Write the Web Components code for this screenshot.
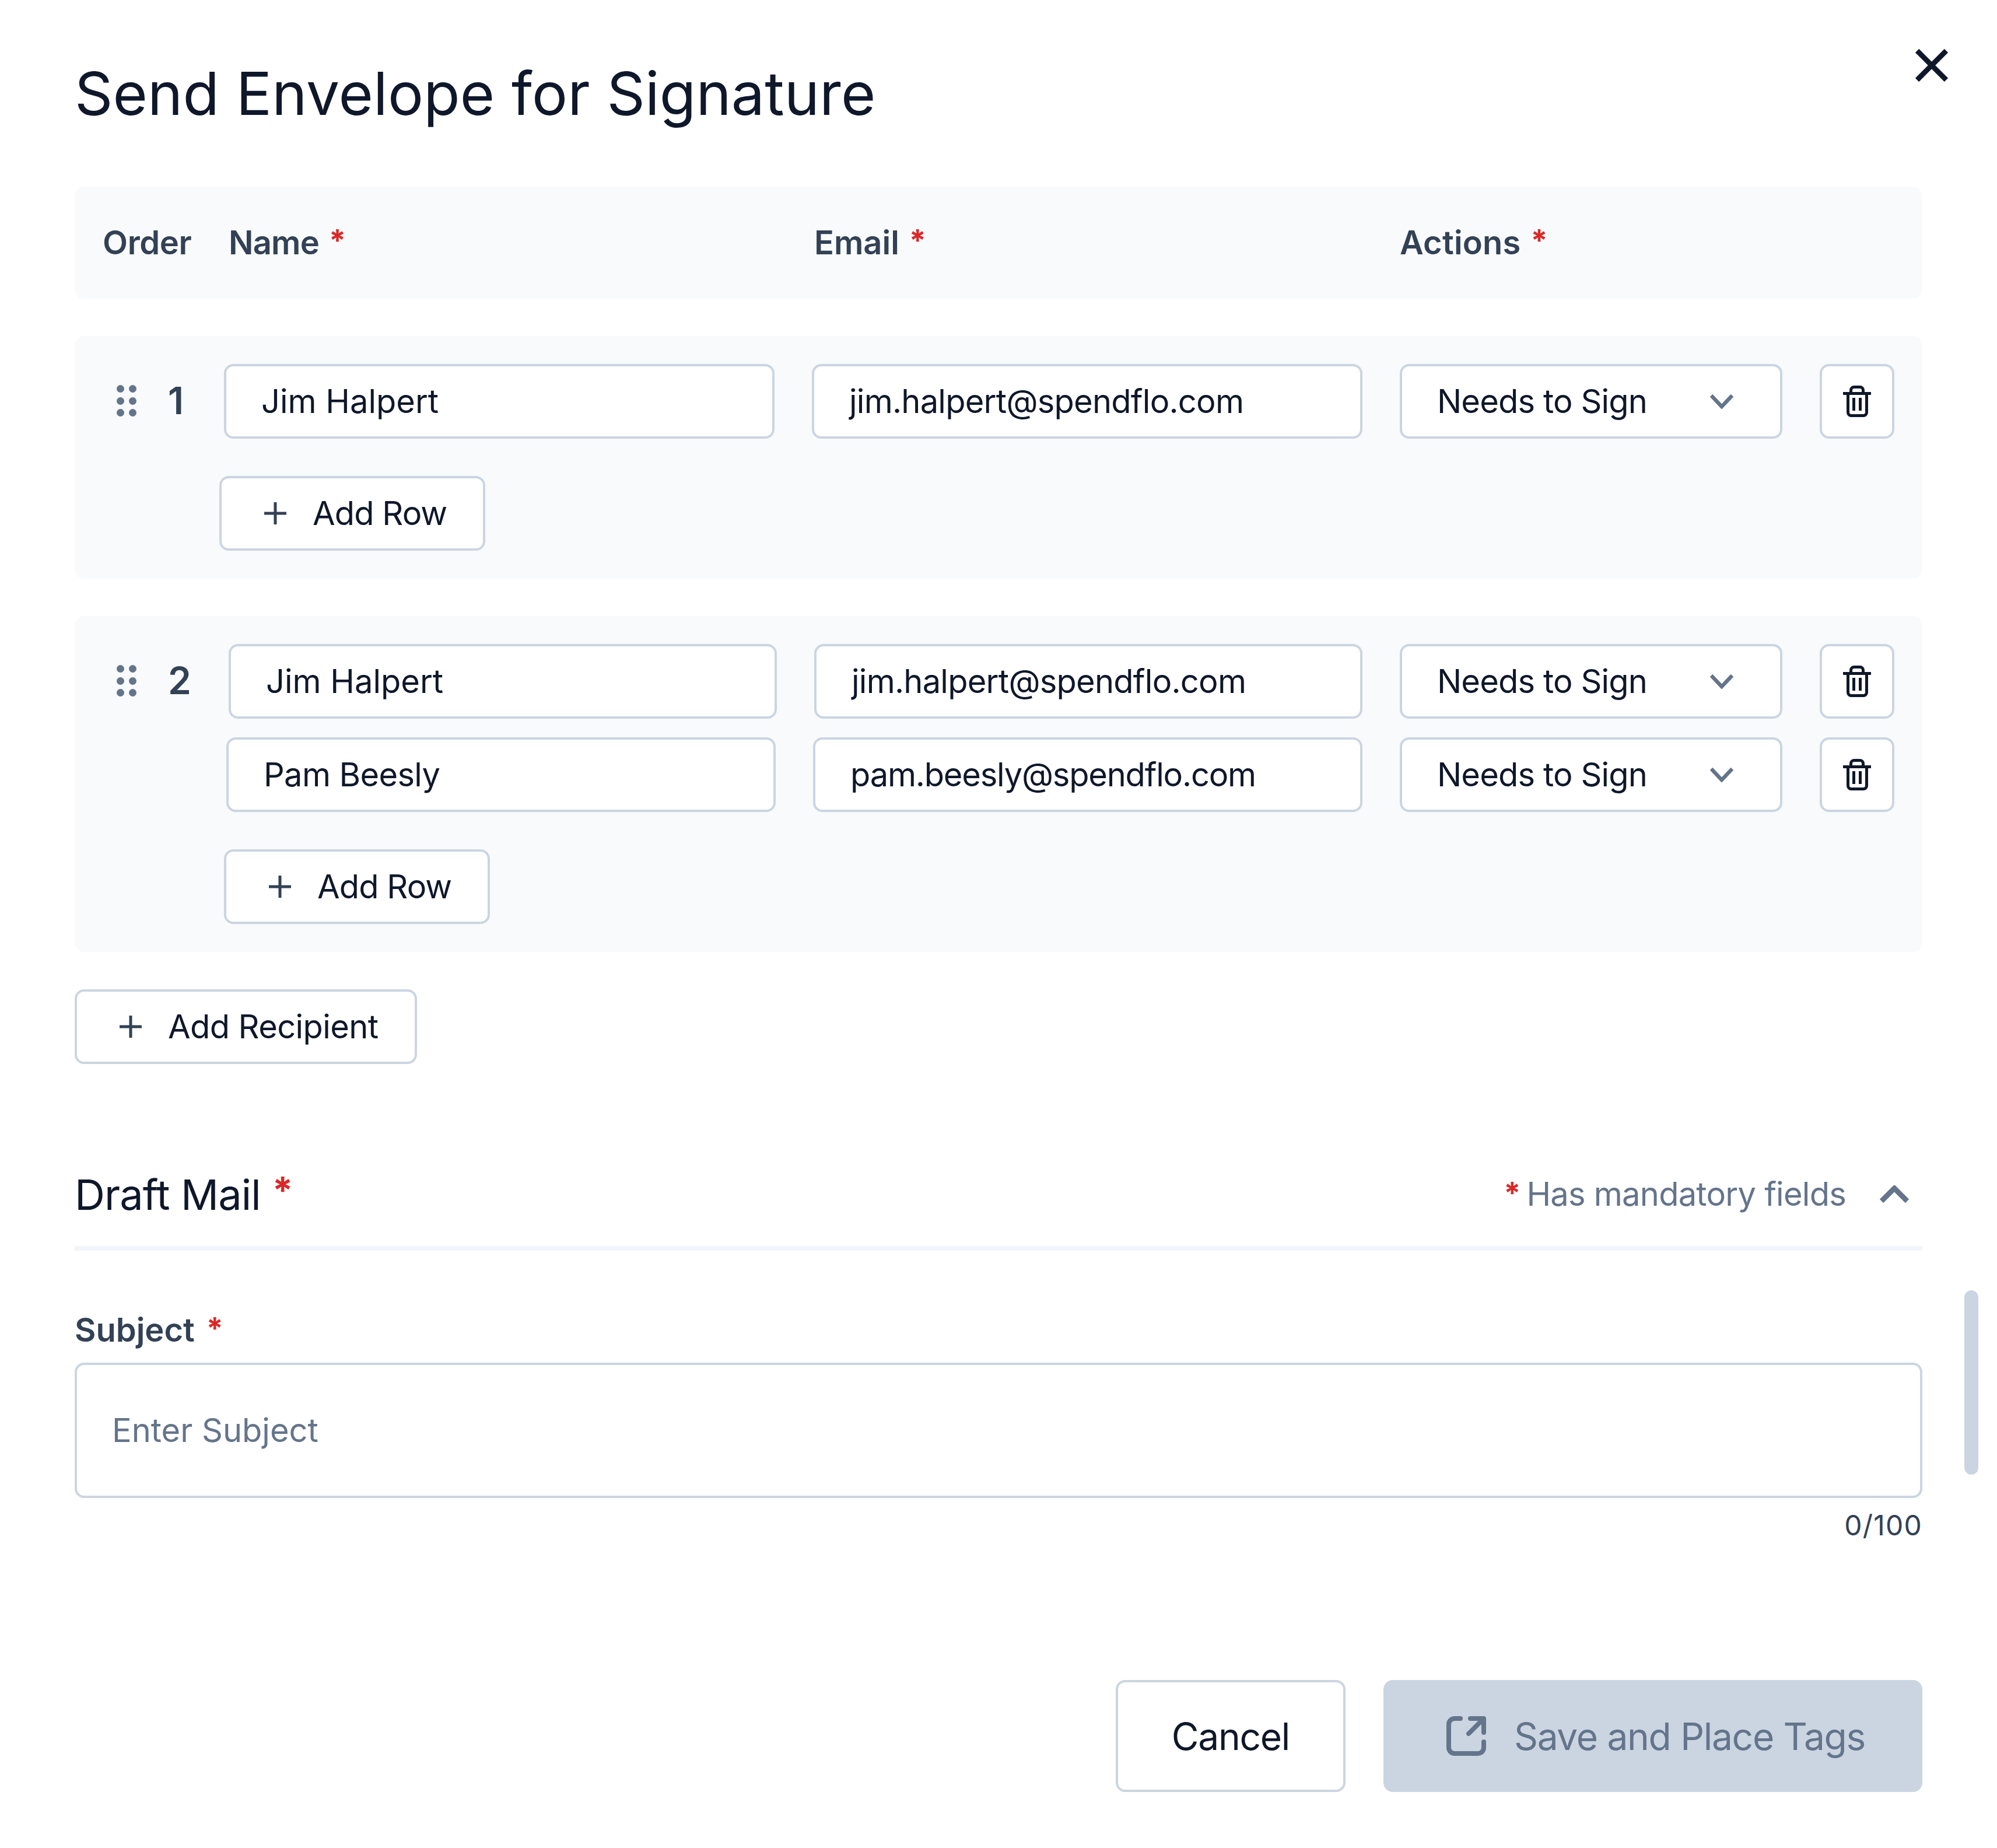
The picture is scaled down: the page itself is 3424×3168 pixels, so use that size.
<!DOCTYPE html>
<html>
<head>
<meta charset="utf-8">
<style>
  html, body { margin: 0; background: #fff; }
  body { font-family: Inter, "Liberation Sans", sans-serif; color: #0F172A; }
</style>
</head>
<body>
<send-modal>
  <span slot="title">Send Envelope for Signature</span>

  <table-head></table-head>

  <recipient-card order="1" add-left="376">
    <recipient-row name="Jim Halpert" email="jim.halpert@spendflo.com" style="--name-ls: 0; --email-ls: -.75px"></recipient-row>
  </recipient-card>

  <recipient-card order="2" add-left="384">
    <recipient-row inset="8" name="Jim Halpert" email="jim.halpert@spendflo.com" style="--name-ls: 0; --email-ls: -.75px"></recipient-row>
    <recipient-row inset="4" name="Pam Beesly" email="pam.beesly@spendflo.com" style="--name-ls: -.65px; --email-ls: -1.2px"></recipient-row>
  </recipient-card>

  <add-button label="Add Recipient" style="margin-top: 64px"></add-button>

  <draft-section></draft-section>
  <modal-footer></modal-footer>
</send-modal>

<script>
const ICONS = {
  plus: '<svg width="38" height="38" viewBox="0 0 38 38" fill="none" stroke="#334155" stroke-width="5"><path d="M19 0v38M0 19h38"/></svg>',
  chevronDown: '<svg width="40" height="26" viewBox="0 0 40 26" fill="none" stroke="#64748B" stroke-width="6.5"><path d="M2 3l18 19L38 3"/></svg>',
  chevronUp: '<svg width="50" height="30" viewBox="0 0 50 30" fill="none" stroke="#64748B" stroke-width="9"><path d="M3 27L25 5l22 22"/></svg>',
  trash: '<svg width="48" height="54" viewBox="0 0 48 54" fill="none" stroke="#0F172A" stroke-width="5"><path d="M0 13.5h48M8.5 13.5V46a5.5 5.5 0 0 0 5.5 5.5h21a5.5 5.5 0 0 0 5.5-5.5V13.5M13.5 13.5V8A5.5 5.5 0 0 1 19 2.5h10A5.5 5.5 0 0 1 34.5 8v5.5M18.5 21v22M29.5 21v22"/></svg>',
  external: '<svg width="68" height="68" viewBox="0 0 68 68" fill="none" stroke="#64748B" stroke-width="8" stroke-linecap="round" stroke-linejoin="round"><path d="M24 4H14A10 10 0 0 0 4 14v40a10 10 0 0 0 10 10h40a10 10 0 0 0 10-10V44"/><path d="M41 4h23v24M62 6L38 30"/></svg>',
  close: '<svg width="56" height="56" viewBox="0 0 56 56" fill="none" stroke="#0F172A" stroke-width="9"><path d="M3 3l50 50M53 3L3 53"/></svg>'
};

class ReqMark extends HTMLElement {
  constructor() {
    super();
    this.attachShadow({ mode: 'open' }).innerHTML = `
      <style>
        :host { display: inline-block; color: #DC2626; font-weight: 700; font-size: var(--req-size, 56px); line-height: 1; margin-left: var(--req-gap, 20px); position: relative; top: var(--req-top, -4px); letter-spacing: 0; }
      </style>*`;
  }
}
customElements.define('req-mark', ReqMark);

class TableHead extends HTMLElement {
  constructor() {
    super();
    this.attachShadow({ mode: 'open' }).innerHTML = `
      <style>
        :host { display: flex; align-items: center; height: 192px; background: #F8FAFC; border-radius: 16px; font-size: 56px; font-weight: 600; color: #334155; padding-left: 48px; margin-bottom: 64px; --req-gap: 17px; --req-size: 52px; --req-top: -5px; }
        span { display: block; }
        .order { width: 216px; letter-spacing: -.4px; }
        .name, .email { width: 1004px; }
        .name { letter-spacing: -.8px; }
        .actions { letter-spacing: .2px; }
      </style>
      <span class="order">Order</span>
      <span class="name">Name<req-mark></req-mark></span>
      <span class="email">Email<req-mark></req-mark></span>
      <span class="actions">Actions<req-mark></req-mark></span>`;
  }
}
customElements.define('table-head', TableHead);

class RecipientRow extends HTMLElement {
  constructor() {
    super();
    this.attachShadow({ mode: 'open' }).innerHTML = `
      <style>
        :host { display: flex; gap: 64px; height: 128px; flex: none; }
        .box { box-sizing: border-box; height: 128px; background: #fff; border: 4px solid #CBD5E1; border-radius: 16px; display: flex; align-items: center; font-size: 56px; color: #0F172A; padding: 0 60px; }
        .field { flex: 1 1 0; min-width: 0; }
        #name { letter-spacing: var(--name-ls, 0); }
        #email { letter-spacing: var(--email-ls, 0); }
        .select { flex: none; width: 656px; justify-content: space-between; padding-right: 80px; letter-spacing: -.85px; }
        .trash { flex: none; width: 128px; justify-content: center; padding: 0; }
      </style>
      <div class="box field" id="name"></div>
      <div class="box field" id="email"></div>
      <div class="box select">Needs to Sign ${ICONS.chevronDown}</div>
      <div class="box trash">${ICONS.trash}</div>`;
  }
  connectedCallback() {
    this.shadowRoot.getElementById('name').textContent = this.getAttribute('name');
    this.shadowRoot.getElementById('email').textContent = this.getAttribute('email');
    this.style.marginLeft = (this.getAttribute('inset') || 0) + 'px';
  }
}
customElements.define('recipient-row', RecipientRow);

class AddButton extends HTMLElement {
  constructor() {
    super();
    this.attachShadow({ mode: 'open' }).innerHTML = `
      <style>
        :host { display: flex; box-sizing: border-box; width: max-content; height: 128px; align-items: center; gap: 45px; padding: 0 62px 0 73px; background: #fff; border: 4px solid #CBD5E1; border-radius: 16px; font-size: 56px; letter-spacing: var(--add-ls, -.6px); color: #0F172A; }
      </style>
      ${ICONS.plus}<span id="t"></span>`;
  }
  connectedCallback() {
    this.shadowRoot.getElementById('t').textContent = this.getAttribute('label');
  }
}
customElements.define('add-button', AddButton);

class RecipientCard extends HTMLElement {
  constructor() {
    super();
    this.attachShadow({ mode: 'open' }).innerHTML = `
      <style>
        :host { display: block; background: #F8FAFC; border-radius: 16px; padding: 48px; margin-bottom: 64px; }
        .top { display: flex; }
        .grip { flex: none; width: 34px; height: 54px; margin: 36px 0 0 24px; display: grid; grid-template-columns: 13px 13px; justify-content: space-between; align-content: space-between; }
        .grip i { width: 13px; height: 13px; border-radius: 50%; background: #64748B; }
        .num { flex: none; width: 96px; margin-left: 54px; font-size: 64px; font-weight: 600; line-height: 126px; color: #334155; }
        .rows { flex: 1; min-width: 0; display: flex; flex-direction: column; gap: 32px; }
        .add { margin-top: 64px; --add-ls: -.9px; }
      </style>
      <div class="top">
        <div class="grip"><i></i><i></i><i></i><i></i><i></i><i></i></div>
        <div class="num" id="n"></div>
        <div class="rows"><slot></slot></div>
      </div>
      <add-button class="add" label="Add Row"></add-button>`;
  }
  connectedCallback() {
    this.shadowRoot.getElementById('n').textContent = this.getAttribute('order');
    this.shadowRoot.querySelector('.add').style.marginLeft = (this.getAttribute('add-left') - 176) + 'px';
  }
}
customElements.define('recipient-card', RecipientCard);

class DraftSection extends HTMLElement {
  constructor() {
    super();
    this.attachShadow({ mode: 'open' }).innerHTML = `
      <style>
        :host { display: block; margin-top: 160px; }
        .head { box-sizing: border-box; display: flex; align-items: center; height: 160px; padding-bottom: 26px; border-bottom: 8px solid #F1F5F9; }
        h2 { margin: 0; font-size: 72px; font-weight: 400; letter-spacing: -.9px; color: #0F172A; --req-gap: 20px; --req-size: 64px; --req-top: -10px; flex: 1; }
        .note { font-size: 56px; letter-spacing: -.75px; color: #64748B; --req-gap: 0; --req-size: 52px; --req-top: -3px; }
        .note req-mark { margin-right: 10px; }
        .head svg { margin-left: 58px; margin-right: 23px; }
        label { display: block; margin-top: 94px; font-size: 56px; font-weight: 600; color: #334155; line-height: 84px; --req-size: 52px; }
        .subject { box-sizing: border-box; height: 232px; margin-top: 14px; border: 4px solid #CBD5E1; border-radius: 16px; padding: 0 60px; display: flex; align-items: center; font-size: 56px; color: #64748B; }
        .count { text-align: right; font-size: 48px; letter-spacing: 1.2px; color: #334155; line-height: 72px; margin-top: 11px; }
      </style>
      <div class="head">
        <h2>Draft Mail<req-mark></req-mark></h2>
        <span class="note"><req-mark></req-mark>Has mandatory fields</span>
        ${ICONS.chevronUp}
      </div>
      <label>Subject<req-mark></req-mark></label>
      <div class="subject">Enter Subject</div>
      <div class="count">0/100</div>`;
  }
}
customElements.define('draft-section', DraftSection);

class ModalFooter extends HTMLElement {
  constructor() {
    super();
    this.attachShadow({ mode: 'open' }).innerHTML = `
      <style>
        :host { display: flex; justify-content: flex-end; gap: 65px; margin-top: 229px; }
        div { box-sizing: border-box; height: 192px; border-radius: 16px; display: flex; align-items: center; font-size: 64px; letter-spacing: -1.3px; }
        .cancel { width: 394px; justify-content: center; border: 4px solid #CBD5E1; color: #0F172A; }
        .save { background: #CBD5E1; color: #64748B; gap: 48px; padding: 0 98px 0 108px; }
      </style>
      <div class="cancel">Cancel</div>
      <div class="save">${ICONS.external}Save and Place Tags</div>`;
  }
}
customElements.define('modal-footer', ModalFooter);

class SendModal extends HTMLElement {
  constructor() {
    super();
    this.attachShadow({ mode: 'open' }).innerHTML = `
      <style>
        :host { display: block; box-sizing: border-box; width: 3424px; height: 3168px; padding: 96px 128px 0; position: relative; background: #fff; overflow: hidden; }
        h1 { margin: 0 0 96px; font-size: 102px; letter-spacing: .1px; font-weight: 400; line-height: 128px; color: #0F172A; }
        .close { position: absolute; left: 3284px; top: 84px; width: 56px; height: 56px; }
        .thumb { position: absolute; left: 3368px; top: 2212px; width: 24px; height: 316px; border-radius: 12px; background: #CBD5E1; }
      </style>
      <h1><slot name="title"></slot></h1>
      <div class="close">${ICONS.close}</div>
      <slot></slot>
      <div class="thumb"></div>`;
  }
}
customElements.define('send-modal', SendModal);
</script>
</body>
</html>
